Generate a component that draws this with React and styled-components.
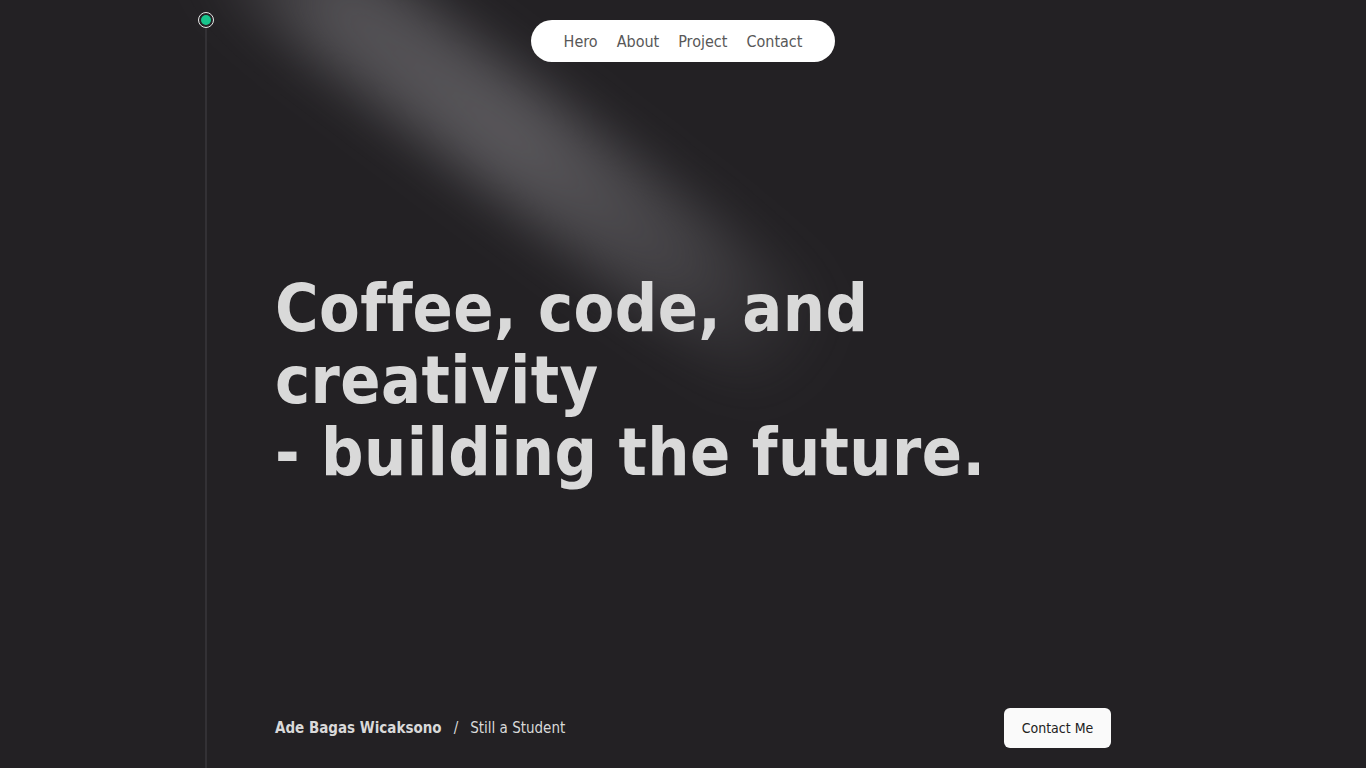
import React from "react";
import styled, { createGlobalStyle } from "styled-components";

const Global = createGlobalStyle`
  html, body { margin: 0; padding: 0; background: #232124; }
  body { font-family: "DejaVu Sans Condensed", "DejaVu Sans", sans-serif; color: #d9d9d9; }
  * { box-sizing: border-box; }
`;

const Page = styled.div`
  position: relative;
  height: 768px;
  overflow: hidden;
  background: #232124;
  display: flex;
`;

const Beam = styled.div`
  position: absolute;
  left: 460px;
  top: -230px;
  width: 110px;
  height: 740px;
  transform: rotate(-53deg);
  transform-origin: 50% 50%;
  background: linear-gradient(180deg, rgba(90,88,92,0.0) 0%, rgba(100,98,102,0.7) 20%, rgba(102,100,104,0.78) 50%, rgba(92,90,94,0.55) 78%, rgba(60,58,62,0) 100%);
  filter: blur(26px);
  border-radius: 55px;
  pointer-events: none;
`;

const Rail = styled.div`
  position: relative;
  z-index: 1;
  margin-left: 198px;
  width: 16px;
  display: flex;
  flex-direction: column;
  align-items: center;
  padding-top: 12px;
`;

const Dot = styled.div`
  width: 16px;
  height: 16px;
  border-radius: 50%;
  border: 1.5px solid #e8e8e8;
  padding: 2px;
  display: flex;
  &::after {
    content: "";
    flex: 1;
    border-radius: 50%;
    background: #18c48c;
  }
`;

const Line = styled.div`
  flex: 1;
  width: 2px;
  background: #333135;
`;

const Main = styled.div`
  position: relative;
  z-index: 1;
  flex: 1;
  display: flex;
  flex-direction: column;
  padding-left: 61px;
  padding-right: 255px;
`;

const Nav = styled.nav`
  align-self: flex-start;
  margin-left: 256px;
  margin-top: 20px;
  height: 42px;
  width: 304px;
  background: #ffffff;
  border-radius: 21px;
  display: flex;
  align-items: center;
  justify-content: center;
  gap: 19px;
`;

const NavLink = styled.a`
  font-size: 16px;
  color: #585858;
  text-decoration: none;
`;

const Headline = styled.h1`
  margin: 211px 0 0 0;
  font-size: 66px;
  line-height: 72px;
  font-weight: 700;
  color: #d9d9d9;
  letter-spacing: 0.4px;
`;

const Footer = styled.div`
  margin-top: auto;
  margin-bottom: 20px;
  display: flex;
  align-items: center;
  justify-content: space-between;
`;

const Byline = styled.div`
  font-size: 15px;
  color: #d9d9d9;
  display: flex;
  gap: 12px;
`;

const Name = styled.span`
  font-weight: 700;
`;

const Button = styled.button`
  height: 40px;
  width: 107px;
  border: none;
  border-radius: 6px;
  background: #fafafa;
  color: #222;
  font-family: inherit;
  font-size: 14px;
`;

export default function App() {
  return (
    <>
      <Global />
      <Page>
        <Beam />
        <Rail>
          <Dot />
          <Line />
        </Rail>
        <Main>
          <Nav>
            <NavLink>Hero</NavLink>
            <NavLink>About</NavLink>
            <NavLink>Project</NavLink>
            <NavLink>Contact</NavLink>
          </Nav>
          <Headline>
            Coffee, code, and
            <br />
            creativity
            <br />- building the future.
          </Headline>
          <Footer>
            <Byline>
              <Name>Ade Bagas Wicaksono</Name>
              <span>/</span>
              <span>Still a Student</span>
            </Byline>
            <Button>Contact Me</Button>
          </Footer>
        </Main>
      </Page>
    </>
  );
}
